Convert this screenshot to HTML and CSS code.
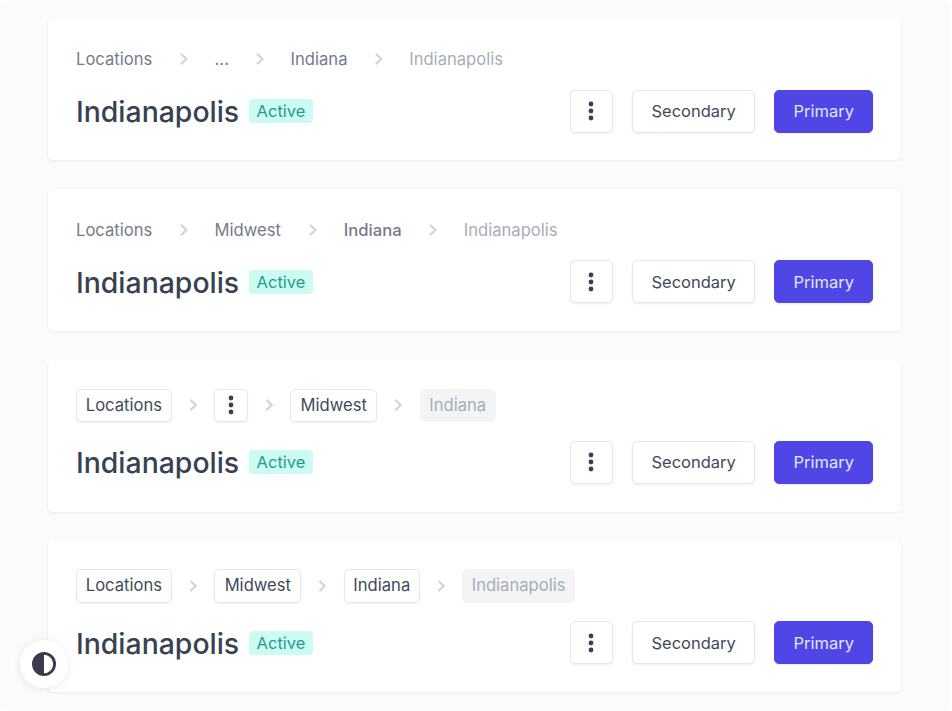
FILE: index.html
```html
<!DOCTYPE html>
<html lang="en"><head><meta charset="utf-8"><title>Page headers</title><link rel="stylesheet" href="styles.css"></head>
<body>
<main class="page" id="page"></main>
<button class="theme" aria-label="Toggle theme"><svg width="24" height="24" viewBox="0 0 24 24"><circle cx="12" cy="12" r="10.6" fill="none" stroke="#3d3a4e" stroke-width="2.8"/><path d="M12 1a11 11 0 0 0 0 22z" fill="#3d3a4e"/></svg></button>
<script src="app.js"></script>
</body></html>
```
FILE: styles.css
```css
* { box-sizing: border-box; }
html { background: #fff; }
body { margin: 0; height: 711px; overflow: hidden; font-family: Inter, sans-serif; color: #374151; }
.page { height: 711px; width: 950px; padding: 18px 49px 0 48px; display: flex; flex-direction: column; gap: 28.5px; background: #fafbfd; border-radius: 6px; }
.card { flex: none; height: 142.4px; padding: 28px 28px 0; background: #fff; border-radius: 5px; box-shadow: 0 1px 3px rgba(20,30,60,.08); }
.card.boxed { height: 152px; }
.crumbs { display: flex; align-items: center; height: 26px; font-size: 16.6px; color: #757b88; white-space: nowrap; }
.boxed .crumbs { height: 35.4px; }
.crumb { flex: none; }
.crumb.current { color: #a7adb8; }
.strong { font-weight: 500; }
.boxed .crumb { height: 33.4px; line-height: 31.4px; border: 1px solid #e5e7eb; border-radius: 5px; text-align: center; color: #414a59; box-shadow: 0 1px 2px rgba(20,30,60,.07); }
.boxed .crumb.current { background: #f3f4f6; border-color: #f3f4f6; color: #a7adb8; box-shadow: none; }
.chevron { flex: none; }
.row { display: flex; align-items: center; height: 43px; margin-top: 17.5px; }
h2 { margin: 0; padding-top: 1px; font-size: 28.4px; font-weight: 500; width: 173px; white-space: nowrap; }
.badge { width: 64px; height: 24px; line-height: 24px; text-align: center; font-size: 16.5px; color: #269a8e; background: #ccfbf1; border-radius: 4px; }
.actions { margin-left: auto; display: flex; gap: 19px; }
.btn { height: 43px; padding: 0; border: 1px solid #e5e7eb; border-radius: 5px; background: #fff; font: 16.5px Inter, sans-serif; color: #414a59; box-shadow: 0 1px 2px rgba(20,30,60,.08); display: grid; place-items: center; }
.more { width: 43px; }
.secondary { width: 123.5px; }
.primary { width: 98.6px; background: #4f46e5; border-color: #4f46e5; color: #e0e7ff; }
.boxed .more-crumb { display: grid; place-items: center; }
.theme { position: fixed; left: 20px; top: 640px; width: 48px; height: 48px; padding: 0; border: 0; border-radius: 50%; background: #fff; box-shadow: 0 1px 8px rgba(20,30,60,.09); display: grid; place-items: center; }
```
FILE: app.js
```js
const dots = '<svg width="6" height="20" viewBox="0 0 6 20" fill="#374151"><circle cx="3" cy="3" r="2.4"/><circle cx="3" cy="10" r="2.4"/><circle cx="3" cy="17" r="2.4"/></svg>';
// Each crumb: label, width, gap to the next crumb, extra class
const cards = [
  { crumbs: [['Locations', 76.6, 62], ['...', 14, 62], ['Indiana', 57, 61.6], ['Indianapolis', 94, 0, 'current']] },
  { crumbs: [['Locations', 76.6, 62], ['Midwest', 67.2, 62], ['Indiana', 58, 62, 'strong'], ['Indianapolis', 94, 0, 'current']] },
  { boxed: true, crumbs: [['Locations', 95.8, 42.6], [dots, 33.4, 42.6, 'more-crumb'], ['Midwest', 86.8, 42.6], ['Indiana', 76, 0, 'current']] },
  { boxed: true, crumbs: [['Locations', 95.8, 42.6], ['Midwest', 86.8, 42.6], ['Indiana', 76, 42.6], ['Indianapolis', 112.4, 0, 'current']] }
];
const chevron = w => `<svg class="chevron" width="${w}" height="14" viewBox="${-w / 2} -7 ${w} 14" fill="none" stroke="#d1d5db" stroke-width="2.3"><path d="M-3-5.3 2.4 0-3 5.3"/></svg>`;
document.getElementById('page').innerHTML = cards.map(c => `<section class="card ${c.boxed ? 'boxed' : ''}"><nav class="crumbs">${c.crumbs.map(([t, w, g, k]) => `<span class="crumb ${k || ''}" style="width:${w}px">${t}</span>${g ? chevron(g) : ''}`).join('')}</nav><div class="row"><h2>Indianapolis</h2><span class="badge">Active</span><div class="actions"><button class="btn more" aria-label="More">${dots}</button><button class="btn secondary">Secondary</button><button class="btn primary">Primary</button></div></div></section>`).join('');
```
